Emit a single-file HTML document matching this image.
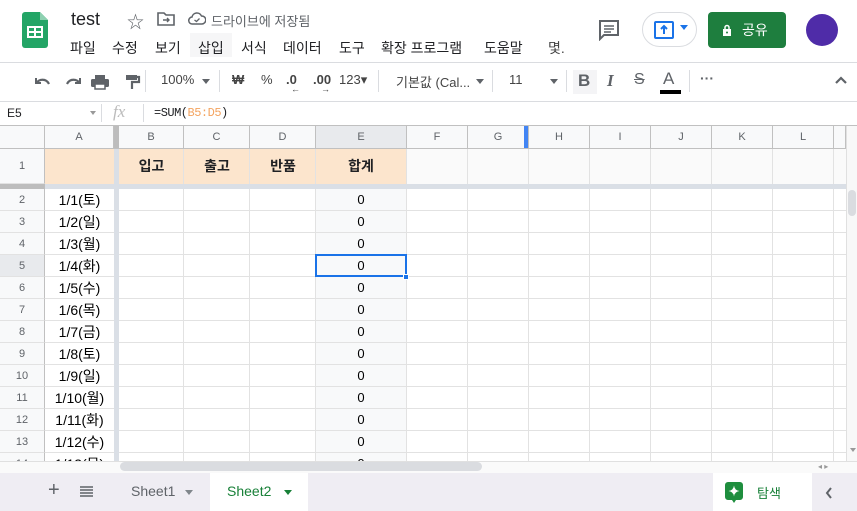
<!DOCTYPE html>
<html><head><meta charset="utf-8">
<style>
*{box-sizing:border-box;margin:0;padding:0}
body{width:857px;height:511px;overflow:hidden;background:#fff;font-family:"Liberation Sans","Noto Sans CJK KR",sans-serif;position:relative;color:#202124;white-space:nowrap}
.a{position:absolute}
.menu span{white-space:nowrap}
.vl{position:absolute;width:1px;background:#e2e2e2}
.hl{position:absolute;height:1px;background:#e2e2e2}
.ch{position:absolute;top:126px;height:23px;font-size:11px;color:#5f6368;text-align:center;line-height:23px;border-right:1px solid #c0c0c0;background:#f8f9fa}
.rh{position:absolute;left:0;width:45px;height:22px;font-size:11px;color:#5f6368;text-align:center;line-height:22px;background:#f8f9fa;border-right:1px solid #c0c0c0;border-bottom:1px solid #e2e2e2}
.dt{position:absolute;left:45px;width:69px;height:22px;text-align:center;font-size:14px;line-height:22px;color:#000}
.z{position:absolute;left:316px;width:90px;height:22px;text-align:center;font-size:13px;line-height:22px;color:#000}
.tb{position:absolute;top:72px;font-size:13px;color:#444}
</style></head><body>
<!-- logo -->
<svg class="a" style="left:22px;top:12px" width="26" height="36" viewBox="0 0 26 36"><path d="M3 0h15l8 8v25a3 3 0 0 1-3 3H3a3 3 0 0 1-3-3V3a3 3 0 0 1 3-3z" fill="#23a566"/><path d="M18 0l8 8h-8z" fill="#8ed1b1"/><rect x="5" y="14" width="16" height="12" fill="#fff"/><rect x="7" y="16" width="5" height="3" fill="#23a566"/><rect x="14" y="16" width="5" height="3" fill="#23a566"/><rect x="7" y="21" width="5" height="3" fill="#23a566"/><rect x="14" y="21" width="5" height="3" fill="#23a566"/></svg>
<div class="a" style="left:71px;top:9px;font-size:18px">test</div>
<div class="a" style="left:127px;top:8px;font-size:17px;color:#5f6368">☆</div>
<svg class="a" style="left:157px;top:12px" width="18" height="14" viewBox="0 0 18 14"><path d="M1 1h6l2 2h8v10H1z" fill="none" stroke="#5f6368" stroke-width="1.6"/><path d="M6 8h6M10 6l2 2-2 2" stroke="#5f6368" stroke-width="1.4" fill="none"/></svg>
<svg class="a" style="left:188px;top:12px" width="18" height="13" viewBox="0 0 18 13"><path d="M4.5 12a3.5 3.5 0 0 1-.5-7A5 5 0 0 1 13.5 4 4 4 0 0 1 14 12z" fill="none" stroke="#5f6368" stroke-width="1.5"/><path d="M6.5 8l2 1.5 3-3" stroke="#5f6368" stroke-width="1.3" fill="none"/></svg>
<div class="a" style="left:211px;top:11px;font-size:13px;color:#5f6368">드라이브에 저장됨</div>
<div class="a" style="left:190px;top:33px;width:42px;height:24px;background:#f6f6f7"></div>
<div class="a menu" style="left:70px;top:38px;width:520px;height:20px;font-size:14px">
<span style="position:absolute;left:0">파일</span><span style="position:absolute;left:42px">수정</span><span style="position:absolute;left:85px">보기</span><span style="position:absolute;left:128px">삽입</span><span style="position:absolute;left:171px">서식</span><span style="position:absolute;left:213px">데이터</span><span style="position:absolute;left:269px">도구</span><span style="position:absolute;left:311px">확장 프로그램</span><span style="position:absolute;left:414px">도움말</span><span style="position:absolute;left:478px;color:#444">몇.</span></div>
<!-- right header -->
<svg class="a" style="left:598px;top:19px" width="22" height="22" viewBox="0 0 22 22"><path d="M2 2h18v14H6l-4 4z" fill="none" stroke="#5f6368" stroke-width="2"/><path d="M6 7h10M6 10h10M6 13h7" stroke="#5f6368" stroke-width="1.6"/></svg>
<div class="a" style="left:642px;top:12px;width:55px;height:35px;border:1px solid #dadce0;border-radius:18px"></div>
<div class="a" style="left:654px;top:21px;width:20px;height:18px;border:2px solid #1a73e8;border-radius:2px"></div>
<svg class="a" style="left:659px;top:24px" width="10" height="11" viewBox="0 0 10 11"><path d="M5 10V3M2 5l3-3 3 3" stroke="#1a73e8" stroke-width="2" fill="none"/></svg>
<div class="a" style="left:680px;top:25px;width:0;height:0;border-left:4px solid transparent;border-right:4px solid transparent;border-top:5px solid #1a73e8"></div>
<div class="a" style="left:708px;top:12px;width:78px;height:36px;background:#1e7e3e;border-radius:4px;color:#fff;font-size:14px;line-height:36px;padding-left:34px">공유</div>
<svg class="a" style="left:722px;top:24px" width="10" height="12" viewBox="0 0 10 12"><rect x="1" y="5" width="8" height="7" fill="#fff"/><path d="M3 5V3.5a2 2 0 0 1 4 0V5" stroke="#fff" stroke-width="1.5" fill="none"/><circle cx="5" cy="8.5" r="1" fill="#1e7e3e"/></svg>
<div class="a" style="left:806px;top:14px;width:32px;height:32px;border-radius:50%;background:#4f2ca8"></div>
<!-- toolbar -->
<div class="a" style="left:0;top:62px;width:857px;height:1px;background:#dadce0"></div>
<div class="a" style="left:0;top:101px;width:857px;height:1px;background:#dadce0"></div>
<svg class="a" style="left:34px;top:74px" width="112" height="16" viewBox="0 0 112 16"><path d="M2 4v5h5" fill="none" stroke="#5f6368" stroke-width="2"/><path d="M2.5 9C5 5 12 4 15 10" fill="none" stroke="#5f6368" stroke-width="2.2"/><path d="M46 4v5h-5" fill="none" stroke="#5f6368" stroke-width="2"/><path d="M45.5 9C43 5 36 4 33 10" fill="none" stroke="#5f6368" stroke-width="2.2"/><rect x="61" y="1" width="10" height="4" fill="#5f6368"/><rect x="57" y="5" width="18" height="8" rx="1.5" fill="#5f6368"/><rect x="61" y="10" width="10" height="5" fill="#fff" stroke="#5f6368" stroke-width="1.5"/><rect x="92" y="1" width="11" height="5" fill="#5f6368"/><path d="M103 3h2v5h-7v7" fill="none" stroke="#5f6368" stroke-width="2.2"/></svg>
<div class="a" style="left:145px;top:70px;width:1px;height:22px;background:#dadce0"></div>
<div class="tb" style="left:161px">100%</div>
<div class="a" style="left:202px;top:79px;border-left:4px solid transparent;border-right:4px solid transparent;border-top:5px solid #5f6368"></div>
<div class="a" style="left:219px;top:70px;width:1px;height:22px;background:#dadce0"></div>
<div class="tb" style="left:232px;font-weight:bold">₩</div>
<div class="tb" style="left:261px">%</div>
<div class="tb" style="left:286px;font-weight:bold">.0</div>
<div class="tb" style="left:313px;font-weight:bold">.00</div>
<div class="a" style="left:291px;top:84px;font-size:9px;color:#444">←</div>
<div class="a" style="left:321px;top:84px;font-size:9px;color:#444">→</div>
<div class="tb" style="left:339px">123▾</div>
<div class="a" style="left:378px;top:70px;width:1px;height:22px;background:#dadce0"></div>
<div class="tb" style="left:396px">기본값 (Cal...</div>
<div class="a" style="left:476px;top:79px;border-left:4px solid transparent;border-right:4px solid transparent;border-top:5px solid #5f6368"></div>
<div class="a" style="left:492px;top:70px;width:1px;height:22px;background:#dadce0"></div>
<div class="tb" style="left:509px">11</div>
<div class="a" style="left:550px;top:79px;border-left:4px solid transparent;border-right:4px solid transparent;border-top:5px solid #5f6368"></div>
<div class="a" style="left:566px;top:70px;width:1px;height:22px;background:#dadce0"></div>
<div class="a" style="left:573px;top:70px;width:24px;height:24px;background:#f4f4f6"></div>
<div class="a" style="left:578px;top:71px;font-size:17px;font-weight:bold;color:#5f6368">B</div>
<div class="a" style="left:607px;top:71px;font-size:17px;font-style:italic;font-weight:bold;color:#5f6368;font-family:'Liberation Serif',serif">I</div>
<div class="a" style="left:634px;top:71px;font-size:16px;color:#5f6368;text-decoration:line-through">S</div>
<div class="a" style="left:663px;top:69px;font-size:17px;color:#5f6368">A</div>
<div class="a" style="left:660px;top:90px;width:21px;height:4px;background:#000"></div>
<div class="a" style="left:689px;top:70px;width:1px;height:22px;background:#dadce0"></div>
<div class="a" style="left:700px;top:70px;font-size:14px;color:#5f6368;font-weight:bold">···</div>
<svg class="a" style="left:834px;top:76px" width="14" height="9" viewBox="0 0 14 9"><path d="M2 7l5-5 5 5" stroke="#5f6368" stroke-width="2.2" fill="none"/></svg>
<!-- formula bar -->
<div class="a" style="left:7px;top:106px;font-size:12px">E5</div>
<div class="a" style="left:90px;top:111px;border-left:3px solid transparent;border-right:3px solid transparent;border-top:4px solid #999"></div>
<div class="a" style="left:101px;top:104px;width:1px;height:18px;background:#dadce0"></div>
<div class="a" style="left:113px;top:102px;font-size:17px;font-style:italic;color:#bbb;font-family:'Liberation Serif',serif">fx</div>
<div class="a" style="left:143px;top:104px;width:1px;height:18px;background:#dadce0"></div>
<div class="a" style="left:154px;top:106px;font-size:12px;font-family:'Liberation Mono',monospace;letter-spacing:-0.5px">=SUM(<span style="color:#f4a460">B5:D5</span>)</div>
<div class="a" style="left:0;top:125px;width:857px;height:1px;background:#c0c0c0"></div>
<!-- grid body -->
<div class="a" style="left:316px;top:149px;width:90px;height:312px;background:#f8f9fa"></div>
<div class="a" style="left:45px;top:149px;width:69px;height:35px;background:#fce5cd"></div>
<div class="a" style="left:119px;top:149px;width:287px;height:35px;background:#fce5cd"></div>
<div class="a" style="left:406px;top:149px;width:440px;height:35px;background:#fafafa"></div>
<div class="vl" style="left:183px;top:149px;height:312px"></div>
<div class="vl" style="left:249px;top:149px;height:312px"></div>
<div class="vl" style="left:315px;top:149px;height:312px"></div>
<div class="vl" style="left:406px;top:149px;height:312px"></div>
<div class="vl" style="left:467px;top:149px;height:312px"></div>
<div class="vl" style="left:528px;top:149px;height:312px"></div>
<div class="vl" style="left:589px;top:149px;height:312px"></div>
<div class="vl" style="left:650px;top:149px;height:312px"></div>
<div class="vl" style="left:711px;top:149px;height:312px"></div>
<div class="vl" style="left:772px;top:149px;height:312px"></div>
<div class="vl" style="left:833px;top:149px;height:312px"></div>
<div class="hl" style="left:45px;top:210px;width:801px"></div>
<div class="hl" style="left:45px;top:232px;width:801px"></div>
<div class="hl" style="left:45px;top:254px;width:801px"></div>
<div class="hl" style="left:45px;top:276px;width:801px"></div>
<div class="hl" style="left:45px;top:298px;width:801px"></div>
<div class="hl" style="left:45px;top:320px;width:801px"></div>
<div class="hl" style="left:45px;top:342px;width:801px"></div>
<div class="hl" style="left:45px;top:364px;width:801px"></div>
<div class="hl" style="left:45px;top:386px;width:801px"></div>
<div class="hl" style="left:45px;top:408px;width:801px"></div>
<div class="hl" style="left:45px;top:430px;width:801px"></div>
<div class="hl" style="left:45px;top:452px;width:801px"></div>
<div class="a" style="left:114px;top:126px;width:5px;height:335px;background:#dadfe6"></div>
<div class="a" style="left:114px;top:126px;width:5px;height:23px;background:#bdbdbd"></div>
<div class="a" style="left:0;top:184px;width:846px;height:5px;background:#dadfe6"></div>
<div class="a" style="left:0;top:184px;width:45px;height:5px;background:#bdbdbd"></div>
<div class="a" style="left:0;top:126px;width:45px;height:23px;background:#f8f9fa;border-right:1px solid #c0c0c0"></div>
<div class="ch" style="left:45px;width:69px">A</div>
<div class="ch" style="left:119px;width:65px">B</div>
<div class="ch" style="left:184px;width:66px">C</div>
<div class="ch" style="left:250px;width:66px">D</div>
<div class="ch" style="left:316px;width:91px;background:#e8eaed">E</div>
<div class="ch" style="left:407px;width:61px">F</div>
<div class="ch" style="left:468px;width:61px">G</div>
<div class="ch" style="left:529px;width:61px">H</div>
<div class="ch" style="left:590px;width:61px">I</div>
<div class="ch" style="left:651px;width:61px">J</div>
<div class="ch" style="left:712px;width:61px">K</div>
<div class="ch" style="left:773px;width:61px">L</div>
<div class="ch" style="left:834px;width:12px"></div>
<div class="a" style="left:524px;top:126px;width:4px;height:23px;background:#4285f4"></div>
<div class="a" style="left:0;top:148px;width:846px;height:1px;background:#c0c0c0"></div>
<div class="rh" style="top:149px;height:35px;line-height:35px">1</div>
<div class="a" style="left:119px;top:149px;width:65px;height:35px;line-height:35px;text-align:center;font-weight:bold;font-size:14px">입고</div>
<div class="a" style="left:184px;top:149px;width:66px;height:35px;line-height:35px;text-align:center;font-weight:bold;font-size:14px">출고</div>
<div class="a" style="left:250px;top:149px;width:66px;height:35px;line-height:35px;text-align:center;font-weight:bold;font-size:14px">반품</div>
<div class="a" style="left:316px;top:149px;width:90px;height:35px;line-height:35px;text-align:center;font-weight:bold;font-size:14px">합계</div>
<div class="rh" style="top:189px">2</div><div class="dt" style="top:189px">1/1(토)</div><div class="z" style="top:189px">0</div>
<div class="rh" style="top:211px">3</div><div class="dt" style="top:211px">1/2(일)</div><div class="z" style="top:211px">0</div>
<div class="rh" style="top:233px">4</div><div class="dt" style="top:233px">1/3(월)</div><div class="z" style="top:233px">0</div>
<div class="rh" style="top:255px;background:#e8eaed">5</div><div class="dt" style="top:255px">1/4(화)</div><div class="z" style="top:255px">0</div>
<div class="rh" style="top:277px">6</div><div class="dt" style="top:277px">1/5(수)</div><div class="z" style="top:277px">0</div>
<div class="rh" style="top:299px">7</div><div class="dt" style="top:299px">1/6(목)</div><div class="z" style="top:299px">0</div>
<div class="rh" style="top:321px">8</div><div class="dt" style="top:321px">1/7(금)</div><div class="z" style="top:321px">0</div>
<div class="rh" style="top:343px">9</div><div class="dt" style="top:343px">1/8(토)</div><div class="z" style="top:343px">0</div>
<div class="rh" style="top:365px">10</div><div class="dt" style="top:365px">1/9(일)</div><div class="z" style="top:365px">0</div>
<div class="rh" style="top:387px">11</div><div class="dt" style="top:387px">1/10(월)</div><div class="z" style="top:387px">0</div>
<div class="rh" style="top:409px">12</div><div class="dt" style="top:409px">1/11(화)</div><div class="z" style="top:409px">0</div>
<div class="rh" style="top:431px">13</div><div class="dt" style="top:431px">1/12(수)</div><div class="z" style="top:431px">0</div>
<div class="a" style="left:0;top:453px;width:846px;height:8px;overflow:hidden"><div class="rh" style="top:0">14</div><div class="dt" style="top:0;left:45px">1/13(목)</div><div class="z" style="top:0">0</div></div>
<div class="a" style="left:315px;top:254px;width:92px;height:23px;border:2px solid #1a73e8"></div>
<div class="a" style="left:403px;top:274px;width:6px;height:6px;background:#1a73e8;border:1px solid #fff"></div>
<div class="a" style="left:846px;top:126px;width:11px;height:335px;background:#f8f8f8;border-left:1px solid #e0e0e0"></div>
<div class="a" style="left:848px;top:190px;width:8px;height:26px;background:#dadce0;border-radius:4px"></div>
<div class="a" style="left:850px;top:448px;border-left:3px solid transparent;border-right:3px solid transparent;border-top:4px solid #999"></div>
<div class="a" style="left:0;top:461px;width:857px;height:12px;background:#fafafa;border-top:1px solid #e0e0e0"></div>
<div class="a" style="left:120px;top:462px;width:362px;height:9px;background:#dadce0;border-radius:5px"></div>
<div class="a" style="left:818px;top:462px;font-size:8px;color:#999">◂ ▸</div>
<div class="a" style="left:0;top:473px;width:857px;height:38px;background:#efedf3"></div>
<div class="a" style="left:48px;top:479px;font-size:20px;color:#5f6368">+</div>
<svg class="a" style="left:80px;top:486px" width="13" height="11" viewBox="0 0 13 11"><path d="M0 1h13M0 4h13M0 7h13M0 10h13" stroke="#5f6368" stroke-width="1.6"/></svg>
<div class="a" style="left:131px;top:483px;font-size:14px;color:#5f6368">Sheet1</div>
<div class="a" style="left:185px;top:490px;border-left:4px solid transparent;border-right:4px solid transparent;border-top:5px solid #80868b"></div>
<div class="a" style="left:210px;top:473px;width:98px;height:38px;background:#fff"></div>
<div class="a" style="left:227px;top:483px;font-size:14px;color:#188038">Sheet2</div>
<div class="a" style="left:284px;top:490px;border-left:4px solid transparent;border-right:4px solid transparent;border-top:5px solid #188038"></div>
<div class="a" style="left:713px;top:473px;width:99px;height:38px;background:#fff"></div>
<svg class="a" style="left:725px;top:482px" width="18" height="21" viewBox="0 0 18 21"><path d="M3 0h12a3 3 0 0 1 3 3v12a3 3 0 0 1-3 3h-4l-2 3-2-3H3a3 3 0 0 1-3-3V3a3 3 0 0 1 3-3z" fill="#1e8e3e"/><path d="M9 3.5Q9.6 8.4 14.5 9Q9.6 9.6 9 14.5Q8.4 9.6 3.5 9Q8.4 8.4 9 3.5z" fill="#fff"/></svg>
<div class="a" style="left:757px;top:483px;font-size:13px;color:#188038">탐색</div>
<svg class="a" style="left:825px;top:487px" width="8" height="12" viewBox="0 0 8 12"><path d="M6 1L2 6l4 5" stroke="#5f6368" stroke-width="2" fill="none"/></svg>
</body></html>
